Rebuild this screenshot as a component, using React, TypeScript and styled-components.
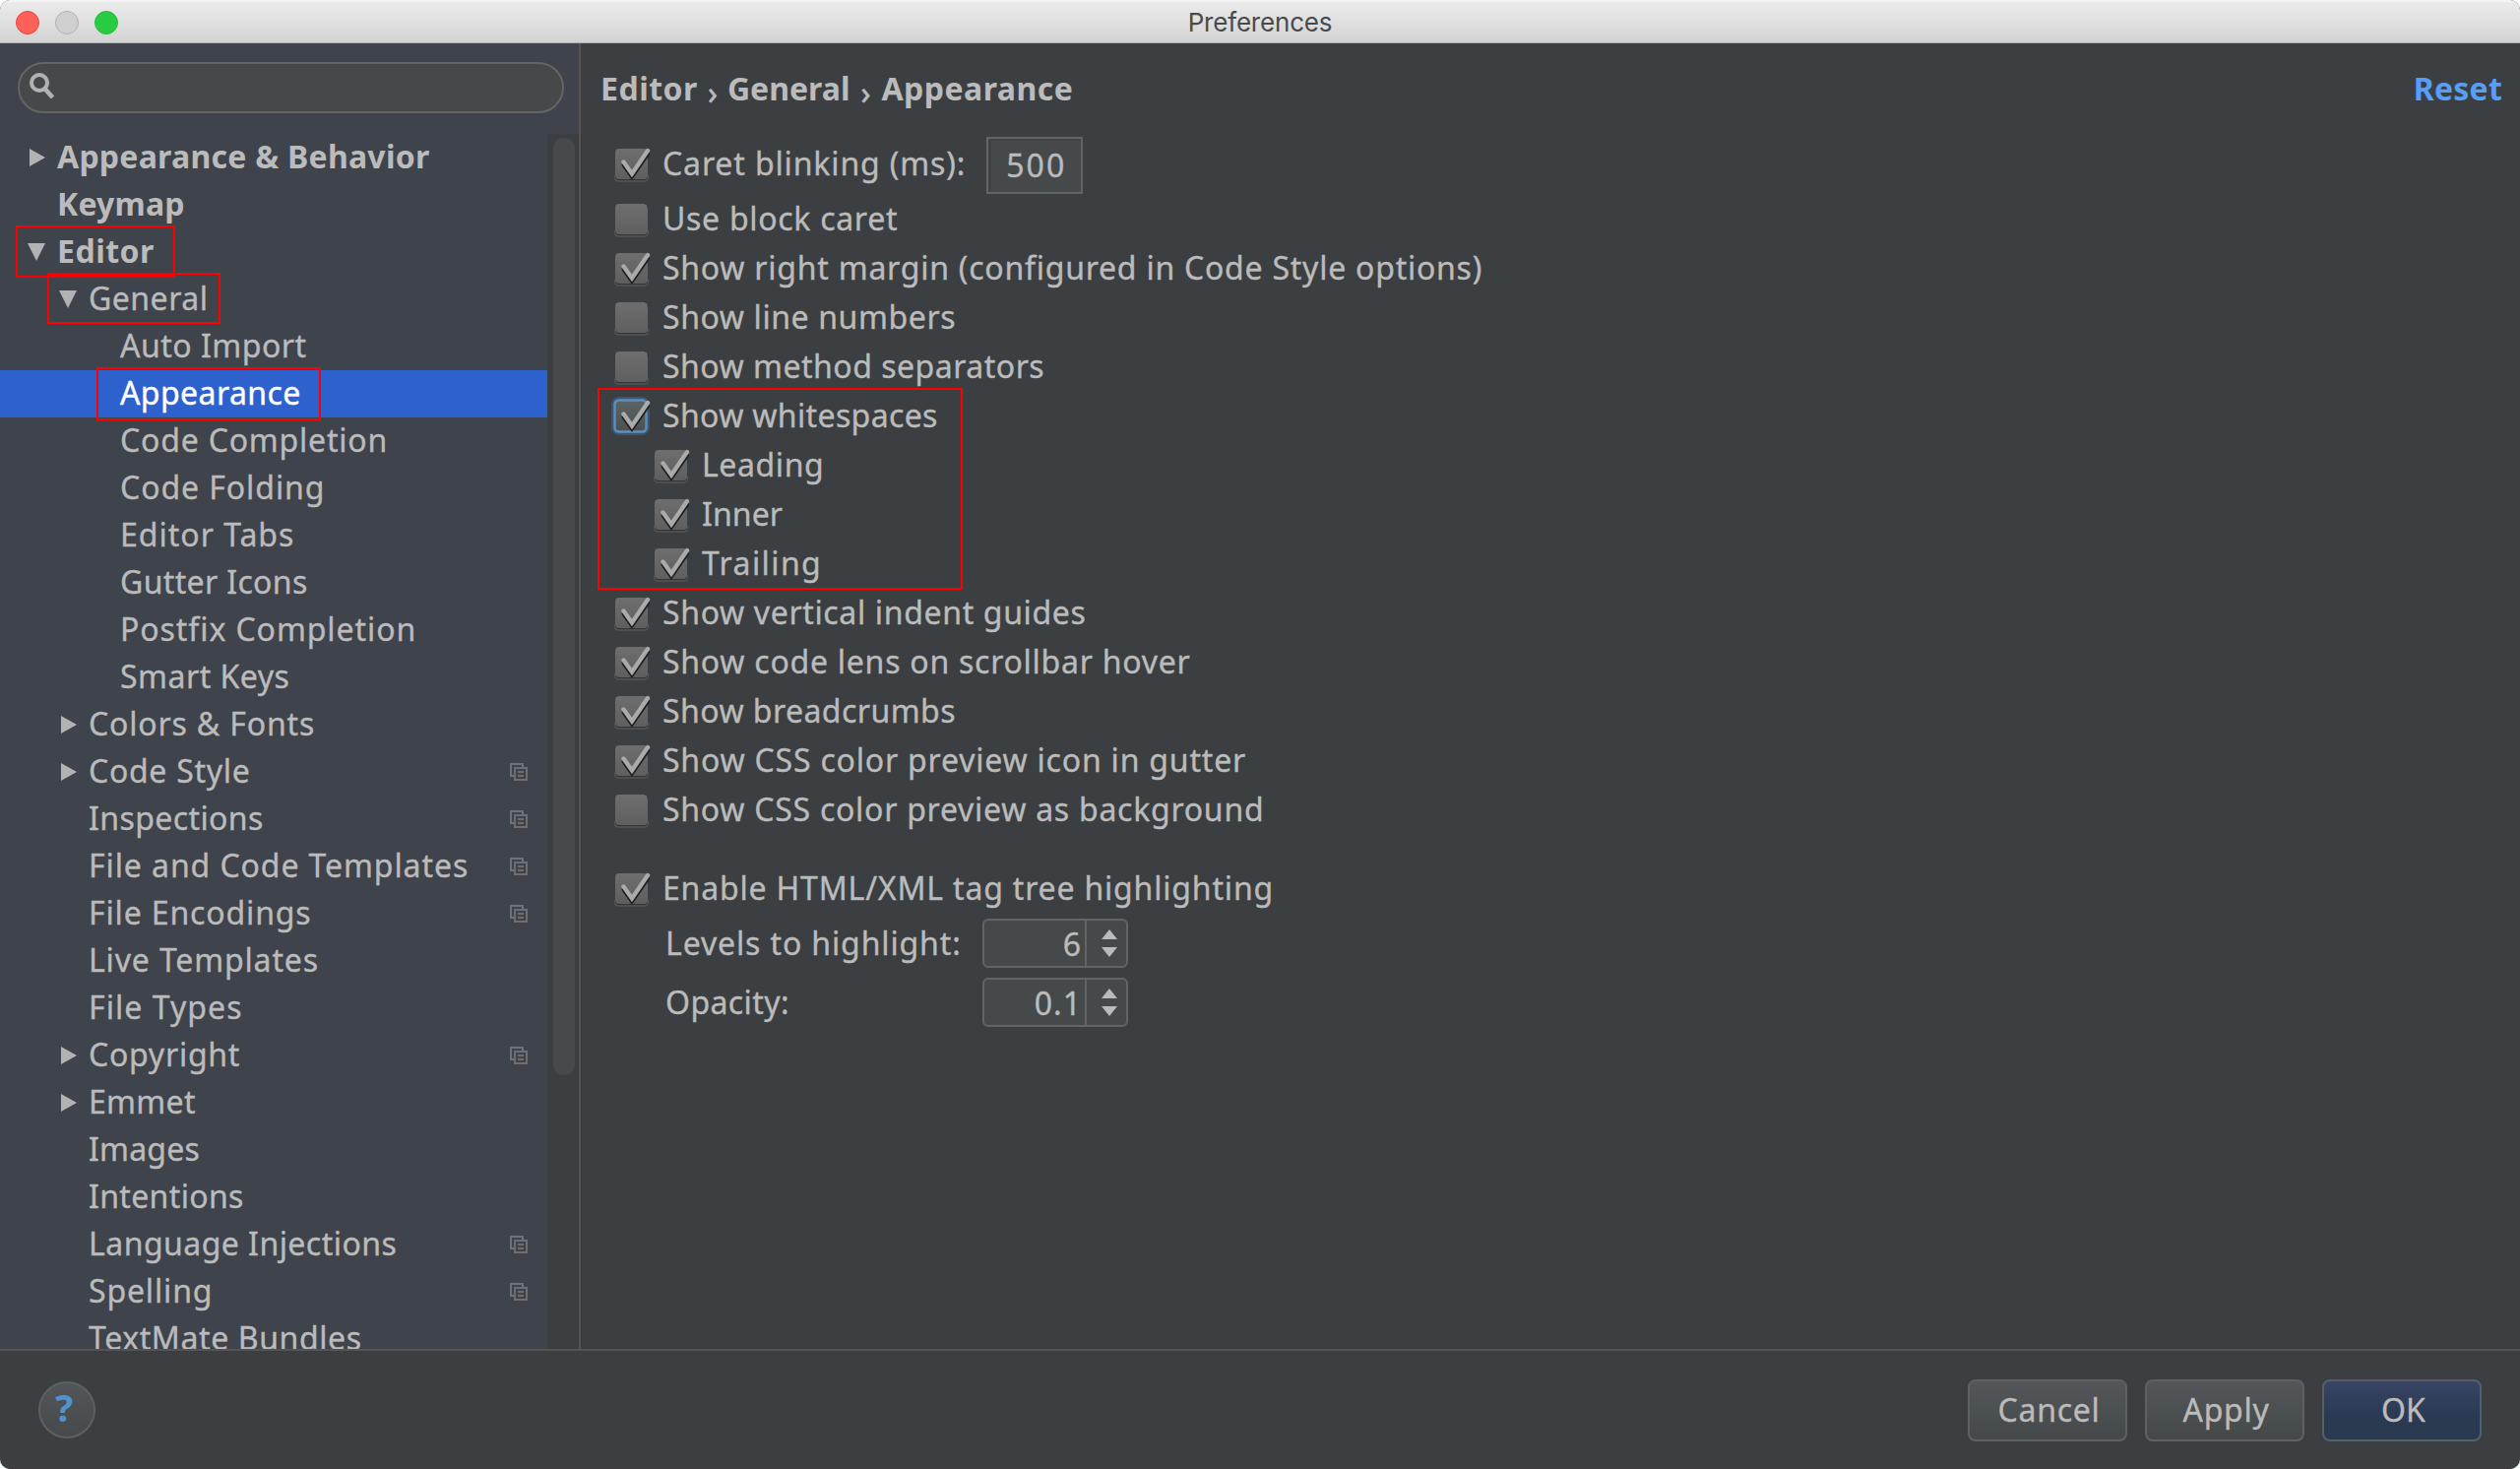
import React from "react";
import styled, { createGlobalStyle, css } from "styled-components";

const Global = createGlobalStyle`
  html, body { margin: 0; padding: 0; background: #ffffff; }
  * { box-sizing: border-box; }
`;

const FONT = `"Noto Sans", "Open Sans", sans-serif`;

const Window = styled.div`
  display: flex;
  flex-direction: column;
  width: 2560px;
  height: 1492px;
  overflow: hidden;
  border-radius: 10px;
  background: #3c3f41;
  color: #bbbbbb;
  font-family: ${FONT};
  font-size: 32px;
  line-height: 48px;
  white-space: nowrap;
`;

const TitleBar = styled.header`
  display: grid;
  grid-template-columns: 1fr auto 1fr;
  align-items: center;
  flex: none;
  height: 44px;
  padding: 0 16px;
  background: linear-gradient(#ebebeb, #d3d3d3);
  border-top: 2px solid #f4f4f4;
  border-bottom: 1px solid #aeaeae;
`;

const Lights = styled.div`
  display: flex;
  gap: 16px;
`;

const Light = styled.span<{ $fill: string; $edge: string }>`
  width: 24px;
  height: 24px;
  border-radius: 50%;
  background: ${(p) => p.$fill};
  border: 1px solid ${(p) => p.$edge};
`;

const Title = styled.h1`
  margin: 0;
  font: 400 26px/40px Inter, Roboto, sans-serif;
  letter-spacing: -0.2px;
  color: #4a4a4a;
`;

const Main = styled.div`
  display: flex;
  flex: none;
  height: 1328px;
  border-bottom: 2px solid #555353;
`;

const Sidebar = styled.aside`
  display: flex;
  flex-direction: column;
  flex: none;
  width: 590px;
  background: #3f434c;
  border-right: 2px solid #555353;
`;

const SearchArea = styled.div`
  flex: none;
  height: 92px;
  padding: 19px 15px 0 18px;
`;

const SearchBox = styled.div`
  display: flex;
  height: 52px;
  padding: 7px 0 0 10px;
  border: 2px solid #646464;
  border-radius: 26px;
  background: #45494a;
`;

const TreeArea = styled.div`
  display: flex;
  flex: 1;
  min-height: 0;
`;

const Tree = styled.ul`
  flex: 1;
  margin: 0;
  padding: 0;
  list-style: none;
  overflow: hidden;
`;

const TreeRow = styled.li<{ $level: number; $selected?: boolean }>`
  position: relative;
  display: flex;
  align-items: center;
  height: 48px;
  padding: 0 20px 0 ${(p) => 25 + p.$level * 32}px;
  ${(p) =>
    p.$selected &&
    css`
      background: #2d62ce;
      color: #ffffff;
    `}
`;

const ArrowSlot = styled.span`
  display: flex;
  flex: none;
  width: 33px;
  padding: 0 0 1px 3px;
`;

const Label = styled.span<{ $track: number; $bold?: boolean }>`
  letter-spacing: ${(p) => p.$track}px;
  font-weight: ${(p) => (p.$bold ? 700 : 400)};
  -webkit-text-stroke: ${(p) => (p.$bold ? 0 : 0.35)}px;
`;

const TreeLabel = styled(Label)`
  flex: 1;
  height: 48px;
  line-height: 45px;
`;

const RedBox = styled.span<{ $x: number; $y: number; $w: number; $h: number }>`
  position: absolute;
  z-index: 1;
  left: ${(p) => p.$x}px;
  top: ${(p) => p.$y}px;
  width: ${(p) => p.$w}px;
  height: ${(p) => p.$h}px;
  border: 2px solid #ff0000;
  pointer-events: none;
`;

const Track = styled.div`
  flex: none;
  width: 32px;
  padding: 4px 4px 0 6px;
  background: #3c3f41;
`;

const Thumb = styled.div`
  height: 952px;
  border-radius: 11px;
  background: #474a4b;
`;

const Content = styled.main`
  flex: 1;
  padding: 22px 18px 0 20px;
`;

const Heading = styled.div`
  display: flex;
  justify-content: space-between;
  height: 48px;
  margin-bottom: 25px;
`;

const Crumbs = styled.div`
  display: flex;
`;

const CrumbSep = styled.span<{ $w: number }>`
  width: ${(p) => p.$w}px;
  padding-top: 4px;
  text-align: center;
  -webkit-text-stroke: 0.6px;
`;

const Reset = styled.a`
  color: #589df6;
  font-weight: 700;
  letter-spacing: 0.2px;
`;

const Form = styled.div`
  display: flex;
  flex-direction: column;
  padding-left: 11px;
`;

const CaretLine = styled.div`
  display: flex;
  height: 58px;
`;

const CheckRow = styled.label<{ $sub?: boolean; $tall?: boolean }>`
  display: flex;
  align-items: center;
  gap: 12px;
  height: ${(p) => (p.$tall ? 54 : 50)}px;
  padding-left: ${(p) => (p.$sub ? 40 : 0)}px;
`;

const Group = styled.div`
  position: relative;
`;

const NumberBox = styled.div`
  width: 98px;
  height: 58px;
  margin-left: 21px;
  padding-left: 18px;
  border: 2px solid #646464;
  background: #45494a;
  box-shadow: inset 3px 2px 0 #3f4344;
  line-height: 54px;
  letter-spacing: 2.1px;
  -webkit-text-stroke: 0.35px;
`;

const TagSection = styled.section`
  display: flex;
  flex-direction: column;
  margin-top: 30px;
`;

const FieldRow = styled.div<{ $gap: number }>`
  display: grid;
  grid-template-columns: 322px auto;
  height: 50px;
  margin-top: ${(p) => p.$gap}px;
  padding-left: 55px;
  line-height: 50px;
`;

const Spinner = styled.div`
  display: flex;
  width: 148px;
  height: 50px;
  border: 2px solid #646464;
  border-radius: 6px;
  background: #45494a;
  line-height: 47px;
`;

const SpinnerValue = styled.span`
  flex: 1;
  padding-right: 3px;
  border-right: 2px solid #646464;
  text-align: right;
  letter-spacing: 1px;
  -webkit-text-stroke: 0.35px;
`;

const SpinnerArrows = styled.span`
  display: flex;
  align-items: center;
  justify-content: center;
  width: 40px;
  padding-left: 5px;
`;

const Footer = styled.footer`
  display: flex;
  align-items: center;
  flex: 1;
  padding: 1px 39px 0;
  border-bottom: 1px solid #45383b;
`;

const Help = styled.button`
  display: flex;
  justify-content: center;
  width: 58px;
  height: 58px;
  margin: 0 auto 0 0;
  padding: 0 6px 0 0;
  border: 2px solid #5e6060;
  border-radius: 50%;
  background: linear-gradient(#535658, #464a4b);
  color: #4f94d0;
  font: 700 38px/48px ${FONT};
`;

const Buttons = styled.div`
  display: flex;
  gap: 18px;
`;

const Button = styled.button<{ $primary?: boolean; $track: number }>`
  width: 162px;
  height: 63px;
  padding: 0 0 0 3px;
  border: 2px solid ${(p) => (p.$primary ? "#53606a" : "#5e6161")};
  border-radius: 8px;
  background: ${(p) =>
    p.$primary
      ? "linear-gradient(#384465, #2a3a52 60%, #29394f)"
      : "linear-gradient(#535658, #4b5052 50%, #444849)"};
  color: #bbbbbb;
  font: 400 32px/58px ${FONT};
  letter-spacing: ${(p) => p.$track}px;
  -webkit-text-stroke: 0.35px;
`;

const Arrow = ({ open }: { open?: boolean }) => (
  <svg width="22" height="18" viewBox="0 0 22 18" fill="#b2b2b2">
    {open ? <path d="M0 0H18L9 18Z" /> : <path d="M2 0V18L18 9Z" />}
  </svg>
);

const SearchIcon = () => (
  <svg width="28" height="28" viewBox="0 0 28 28" fill="none" stroke="#b2b2b2">
    <circle cx="10" cy="12" r="8" strokeWidth="4" />
    <path d="M15.5 18L23.5 27" strokeWidth="4.6" />
  </svg>
);

const ProjectIcon = () => (
  <svg width="18" height="18" viewBox="0 0 18 18" fill="none" strokeWidth="2">
    <path d="M4 13H1V1H13V4" stroke="#677480" />
    <path d="M5 5H17V17H5ZM8 9H14M8 13H14" stroke="#6f6d6b" />
  </svg>
);

const Check = ({ on, focus }: { on?: boolean; focus?: boolean }) => (
  <svg width="40" height="40" viewBox="-4 -5 40 40" fill="none">
    <defs>
      <linearGradient id="box" x1="0" y1="0" x2="0" y2="1">
        <stop offset="0" stopColor="#6e6e6e" />
        <stop offset="1" stopColor="#5f5f5f" />
      </linearGradient>
      <linearGradient id="boxFocus" x1="0" y1="0" x2="0" y2="1">
        <stop offset="0" stopColor="#5d6265" />
        <stop offset="1" stopColor="#4b5053" />
      </linearGradient>
    </defs>
    {focus ? (
      <>
        <rect x="-2" y="-2" width="35" height="35" rx="6" stroke="#3d5f88" strokeWidth="4" opacity="0.7" />
        <rect x="-0.5" y="-0.5" width="32" height="32" rx="4" fill="url(#boxFocus)" stroke="#5890c4" strokeWidth="2.4" />
      </>
    ) : (
      <>
        <path d="M-0.5 27V28.5Q-0.5 33 4 33H29Q33.5 33 33.5 28.5V27" stroke="#515455" strokeWidth="1.5" />
        <rect x="0" y="0" width="33" height="32" rx="4" fill="#333536" />
        <rect x="0" y="0" width="33" height="31" rx="4" fill="url(#box)" />
      </>
    )}
    {on ? (
      <>
        <path d="M8.5 16.5L17 28.5L33 5.5" stroke="#1e1e1e" strokeWidth="4" strokeLinecap="round" />
        <path d="M8.5 13.5L17 25.5L33 2" stroke="#aaaaaa" strokeWidth="4.4" strokeLinecap="round" />
      </>
    ) : (
      <path d="M30 -0.5L33 2V6" stroke="#2a2c2d" strokeWidth="1" strokeDasharray="1 1.5" />
    )}
  </svg>
);

type Node = {
  text: string;
  level: number;
  track: number;
  arrow?: "open" | "closed";
  project?: boolean;
  selected?: boolean;
  mark?: [number, number, number, number];
};

const TREE: Node[] = [
  { text: "Appearance & Behavior", level: 0, track: 0.25, arrow: "closed" },
  { text: "Keymap", level: 0, track: 0.2 },
  { text: "Editor", level: 0, track: 0.5, arrow: "open", mark: [16, -3, 162, 53] },
  { text: "General", level: 1, track: 0.5, arrow: "open", mark: [48, -3, 176, 52] },
  { text: "Auto Import", level: 2, track: 0.5 },
  { text: "Appearance", level: 2, track: 0.42, selected: true, mark: [98, -3, 228, 54] },
  { text: "Code Completion", level: 2, track: 0.8 },
  { text: "Code Folding", level: 2, track: 0.93 },
  { text: "Editor Tabs", level: 2, track: 1 },
  { text: "Gutter Icons", level: 2, track: 0.35 },
  { text: "Postfix Completion", level: 2, track: 0.92 },
  { text: "Smart Keys", level: 2, track: 0.5 },
  { text: "Colors & Fonts", level: 1, track: 0.83, arrow: "closed" },
  { text: "Code Style", level: 1, track: 0.7, arrow: "closed", project: true },
  { text: "Inspections", level: 1, track: 0.4, project: true },
  { text: "File and Code Templates", level: 1, track: 0.91, project: true },
  { text: "File Encodings", level: 1, track: 0.86, project: true },
  { text: "Live Templates", level: 1, track: 0.85 },
  { text: "File Types", level: 1, track: 1.05 },
  { text: "Copyright", level: 1, track: 0.75, arrow: "closed", project: true },
  { text: "Emmet", level: 1, track: 0.3, arrow: "closed" },
  { text: "Images", level: 1, track: 0.2 },
  { text: "Intentions", level: 1, track: 0.35 },
  { text: "Language Injections", level: 1, track: 0.46, project: true },
  { text: "Spelling", level: 1, track: 0.85, project: true },
  { text: "TextMate Bundles", level: 1, track: 0.6 },
];

type Option = { text: string; track: number; on?: boolean; sub?: boolean; focus?: boolean; tall?: boolean };

const CheckOption = ({ text, track, on, sub, focus, tall }: Option) => (
  <CheckRow $sub={sub} $tall={tall}>
    <Check on={on} focus={focus} />
    <Label $track={track}>{text}</Label>
  </CheckRow>
);

const BEFORE: Option[] = [
  { text: "Use block caret", track: 0.7 },
  { text: "Show right margin (configured in Code Style options)", track: 0.76, on: true },
  { text: "Show line numbers", track: 0.6 },
  { text: "Show method separators", track: 0.5 },
];

const WHITESPACE: Option[] = [
  { text: "Show whitespaces", track: 0.36, on: true, focus: true },
  { text: "Leading", track: 0.6, on: true, sub: true },
  { text: "Inner", track: 0.1, on: true, sub: true },
  { text: "Trailing", track: 1.4, on: true, sub: true },
];

const AFTER: Option[] = [
  { text: "Show vertical indent guides", track: 0.65, on: true },
  { text: "Show code lens on scrollbar hover", track: 0.75, on: true },
  { text: "Show breadcrumbs", track: 0.45, on: true },
  { text: "Show CSS color preview icon in gutter", track: 0.8, on: true },
  { text: "Show CSS color preview as background", track: 0.74 },
];

const NumberSpinner = ({ value }: { value: string }) => (
  <Spinner>
    <SpinnerValue>{value}</SpinnerValue>
    <SpinnerArrows>
      <svg width="16" height="28" viewBox="0 0 16 28" fill="#bbbbbb">
        <path d="M8 0L16 10H0ZM8 28L0 18H16Z" />
      </svg>
    </SpinnerArrows>
  </Spinner>
);

export default function App() {
  return (
    <>
      <Global />
      <Window>
        <TitleBar>
          <Lights>
            <Light $fill="#ff6159" $edge="#e2463f" />
            <Light $fill="#d1d0d1" $edge="#b3b2b3" />
            <Light $fill="#29cb42" $edge="#25bd3b" />
          </Lights>
          <Title>Preferences</Title>
        </TitleBar>
        <Main>
          <Sidebar>
            <SearchArea>
              <SearchBox>
                <SearchIcon />
              </SearchBox>
            </SearchArea>
            <TreeArea>
              <Tree>
                {TREE.map((n) => (
                  <TreeRow key={n.text} $level={n.level} $selected={n.selected}>
                    <ArrowSlot>{n.arrow && <Arrow open={n.arrow === "open"} />}</ArrowSlot>
                    <TreeLabel $track={n.track} $bold={n.level === 0}>
                      {n.text}
                    </TreeLabel>
                    {n.project && <ProjectIcon />}
                    {n.mark && <RedBox $x={n.mark[0]} $y={n.mark[1]} $w={n.mark[2]} $h={n.mark[3]} />}
                  </TreeRow>
                ))}
              </Tree>
              <Track>
                <Thumb />
              </Track>
            </TreeArea>
          </Sidebar>
          <Content>
            <Heading>
              <Crumbs>
                <Label $track={0.5} $bold>Editor</Label>
                <CrumbSep $w={30}>›</CrumbSep>
                <Label $track={0} $bold>General</Label>
                <CrumbSep $w={32}>›</CrumbSep>
                <Label $track={0.47} $bold>Appearance</Label>
              </Crumbs>
              <Reset>Reset</Reset>
            </Heading>
            <Form>
              <CaretLine>
                <CheckOption text="Caret blinking (ms):" track={0.87} on tall />
                <NumberBox>500</NumberBox>
              </CaretLine>
              {BEFORE.map((o) => (
                <CheckOption key={o.text} {...o} />
              ))}
              <Group>
                {WHITESPACE.map((o) => (
                  <CheckOption key={o.text} {...o} />
                ))}
                <RedBox $x={-14} $y={-3} $w={371} $h={205} />
              </Group>
              {AFTER.map((o) => (
                <CheckOption key={o.text} {...o} />
              ))}
              <TagSection>
                <CheckOption text="Enable HTML/XML tag tree highlighting" track={0.82} on />
                <FieldRow $gap={6}>
                  <Label $track={0.87}>Levels to highlight:</Label>
                  <NumberSpinner value="6" />
                </FieldRow>
                <FieldRow $gap={10}>
                  <Label $track={0.4}>Opacity:</Label>
                  <NumberSpinner value="0.1" />
                </FieldRow>
              </TagSection>
            </Form>
          </Content>
        </Main>
        <Footer>
          <Help>?</Help>
          <Buttons>
            <Button $track={0.7}>Cancel</Button>
            <Button $track={0.7}>Apply</Button>
            <Button $primary $track={0}>OK</Button>
          </Buttons>
        </Footer>
      </Window>
    </>
  );
}
